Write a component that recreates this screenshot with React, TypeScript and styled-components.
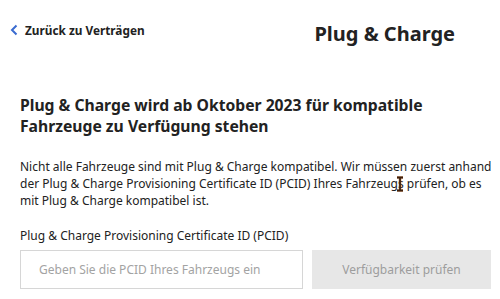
import styled, { createGlobalStyle } from "styled-components";

const GlobalStyle = createGlobalStyle`
  html, body {
    margin: 0;
    padding: 0;
    background: #fff;
  }
  body {
    font-family: "Noto Sans", "Liberation Sans", sans-serif;
    color: #222;
  }
`;

const Page = styled.div({
  position: "relative",
  width: 500,
  height: 299,
  overflow: "hidden",
  display: "flex",
  flexDirection: "column",
});

const Header = styled.header({
  display: "flex",
  alignItems: "center",
  justifyContent: "space-between",
  padding: "18px 45px 0 10px",
  height: 30,
});

const BackLink = styled.a({
  display: "flex",
  alignItems: "center",
  gap: 6,
  fontSize: 11.8,
  fontWeight: 700,
  color: "#222",
  textDecoration: "none",
  marginTop: -6,
});

const PageTitle = styled.h1({
  margin: 0,
  fontSize: 20,
  fontWeight: 700,
  color: "#222",
});

const Content = styled.main({
  display: "flex",
  flexDirection: "column",
  padding: "47px 0 0 20px",
});

const Heading = styled.h2({
  margin: 0,
  fontSize: 15.7,
  lineHeight: "21px",
  fontWeight: 700,
});

const Text = styled.p({
  margin: "21px 0 0",
  width: 476,
  fontSize: 12,
  lineHeight: "17px",
});

const Label = styled.label({
  marginTop: 18,
  fontSize: 12,
  lineHeight: "18px",
});

const FormRow = styled.div({
  display: "flex",
  gap: 9,
  marginTop: 5,
});

const Input = styled.input({
  boxSizing: "border-box",
  width: 283,
  height: 39,
  border: "1px solid #d6d6d6",
  padding: "0 18px",
  fontFamily: "inherit",
  fontSize: 12,
  color: "#222",
  outline: "none",
  "&::placeholder": {
    color: "#a3a3a3",
  },
});

const CheckButton = styled.button({
  width: 179,
  height: 39,
  border: "none",
  background: "#e7e7e7",
  color: "#9d9d9d",
  fontFamily: "inherit",
  fontSize: 12,
});

const Cursor = styled.svg({
  position: "absolute",
  left: 396,
  top: 176,
});

export default function App() {
  return (
    <>
      <GlobalStyle />
      <Page>
        <Header>
          <BackLink href="#">
            <svg width="9" height="12" viewBox="0 0 9 12">
              <path d="M6.5 1.5 L2 6 L6.5 10.5" fill="none" stroke="#3a6bd0" strokeWidth="2" />
            </svg>
            Zurück zu Verträgen
          </BackLink>
          <PageTitle>Plug &amp; Charge</PageTitle>
        </Header>
        <Content>
          <Heading>
            Plug &amp; Charge wird ab Oktober 2023 für kompatible Fahrzeuge zu Verfügung stehen
          </Heading>
          <Text>
            Nicht alle Fahrzeuge sind mit Plug &amp; Charge kompatibel. Wir müssen zuerst anhand der
            Plug &amp; Charge Provisioning Certificate ID (PCID) Ihres Fahrzeugs prüfen, ob es mit
            Plug &amp; Charge kompatibel ist.
          </Text>
          <Label htmlFor="pcid">Plug &amp; Charge Provisioning Certificate ID (PCID)</Label>
          <FormRow>
            <Input id="pcid" placeholder="Geben Sie die PCID Ihres Fahrzeugs ein" />
            <CheckButton disabled>Verfügbarkeit prüfen</CheckButton>
          </FormRow>
        </Content>
        <Cursor width="8" height="16" viewBox="0 0 8 16">
          <path d="M1 1.5 H7 M4 1.5 V14.5 M1 14.5 H7" stroke="#c8702a" strokeWidth="3" fill="none" opacity="0.5" />
          <path d="M1 1.5 H7 M4 1.5 V14.5 M1 14.5 H7" stroke="#3d1f0c" strokeWidth="1.8" fill="none" />
        </Cursor>
      </Page>
    </>
  );
}
